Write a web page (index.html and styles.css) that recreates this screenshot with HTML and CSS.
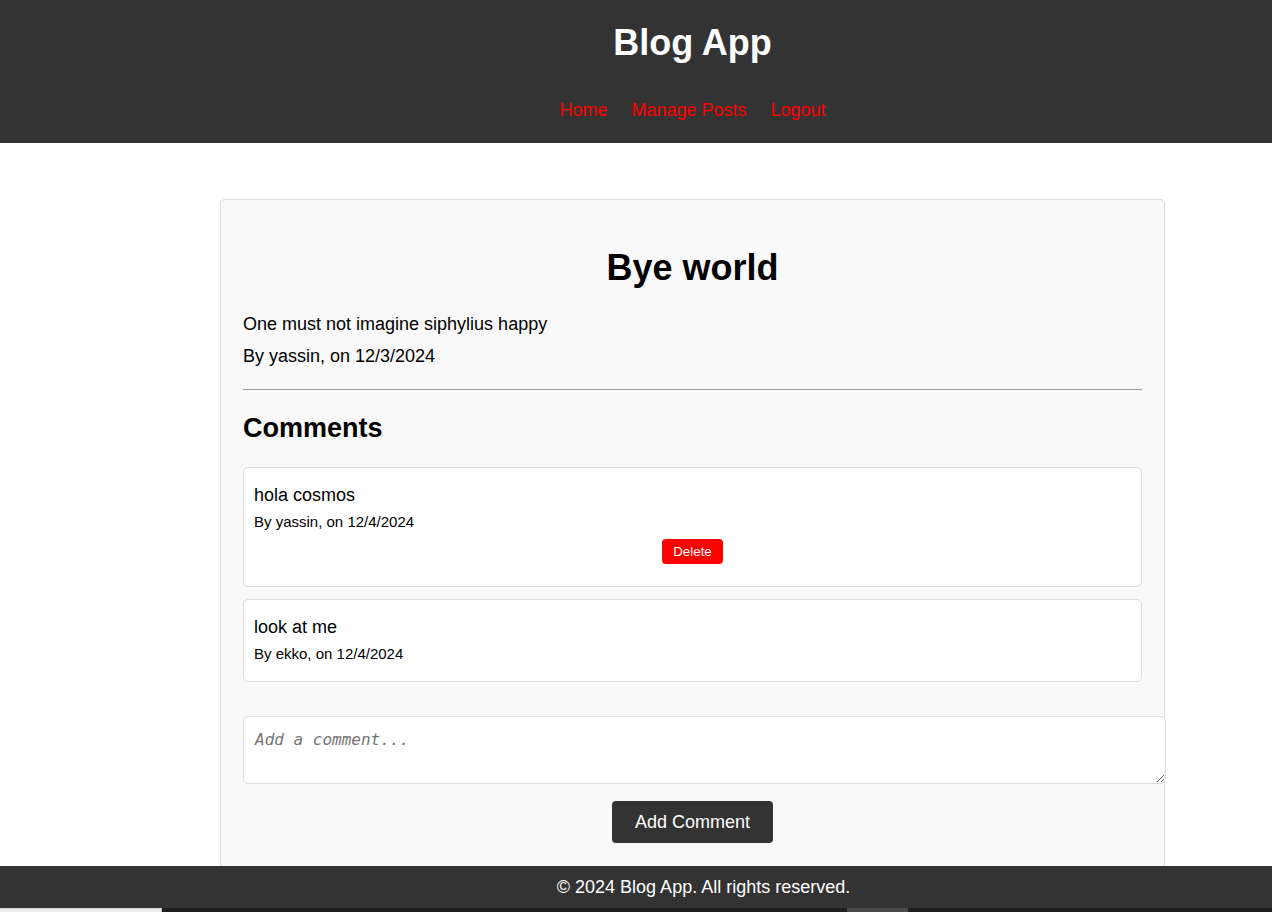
FILE: index.html
```html
<!DOCTYPE html>
<html lang="en">
<head>
<meta charset="utf-8">
<title>Blog App</title>
<link rel="stylesheet" href="styles.css">
</head>
<body>
<header class="site-header">
  <h1 class="site-title">Blog App</h1>
  <nav class="site-nav">
    <a href="#" class="nav-link">Home</a>
    <a href="#" class="nav-link">Manage Posts</a>
    <a href="#" class="nav-link">Logout</a>
  </nav>
</header>

<main class="main">
  <article class="post-card">
    <h2 class="post-title">Bye world</h2>
    <p class="post-body">One must not imagine siphylius happy</p>
    <p class="post-meta">By yassin, on 12/3/2024</p>
    <hr class="divider">
    <h3 class="comments-title">Comments</h3>

    <div class="comment">
      <p class="comment-text">hola cosmos</p>
      <p class="comment-meta">By yassin, on 12/4/2024</p>
      <div class="comment-actions">
        <button class="btn-delete" type="button">Delete</button>
      </div>
    </div>

    <div class="comment">
      <p class="comment-text">look at me</p>
      <p class="comment-meta">By ekko, on 12/4/2024</p>
    </div>

    <form class="comment-form">
      <textarea class="comment-input" placeholder="Add a comment..."></textarea>
      <button class="btn-add" type="button">Add Comment</button>
    </form>
  </article>
</main>

<div class="bottom-dock">
  <footer class="site-footer">© 2024 Blog App. All rights reserved.</footer>
  <div class="strip">
    <span class="strip-light"></span>
    <span class="strip-dark"></span>
    <span class="strip-mid"></span>
    <span class="strip-rest"></span>
  </div>
</div>
</body>
</html>
```

FILE: styles.css
```css
* { box-sizing: content-box; }

body {
  margin: 0;
  font-family: "Liberation Sans", Arial, sans-serif;
  font-size: 18px;
  color: #000;
  background: #fff;
}

.site-header {
  background: #333;
  padding: 22px 0 22px 113px;
  text-align: center;
}

.site-title {
  margin: 0 0 36px;
  font-size: 36px;
  font-weight: bold;
  color: #fff;
  line-height: normal;
}

.site-nav {
  display: flex;
  justify-content: center;
  gap: 24px;
}

.nav-link {
  color: #f00;
  text-decoration: none;
  font-size: 18px;
}

.main {
  padding-left: 113px;
}

.post-card {
  width: 899px;
  margin: 56px auto 0;
  padding: 22px 22px 26px;
  background: #f9f9f9;
  border: 1px solid #ddd;
  border-radius: 5px;
}

.post-title {
  margin: 25px 0 25px;
  font-size: 36px;
  text-align: center;
}

.post-body,
.post-meta {
  margin: 11px 0;
}

.divider {
  border: 0;
  border-top: 1px solid #999;
  margin: 22px 0 23px;
  height: 0;
}

.comments-title {
  margin: 23px 0 23px;
  font-size: 27px;
}

.comment {
  background: #fff;
  border: 1px solid #ddd;
  border-radius: 5px;
  padding: 10px;
  margin-bottom: 12px;
}

.comment-text {
  margin: 7px 0 7px;
  font-size: 18px;
}

.comment-meta {
  margin: 0 0 9px;
  font-size: 15px;
}

.comment-actions {
  display: flex;
  justify-content: center;
  margin-bottom: 12px;
}

.btn-delete {
  background: #f00;
  color: #fff;
  border: none;
  border-radius: 4px;
  padding: 5px 11px;
  font-family: "Liberation Sans", Arial, sans-serif;
  font-size: 13.33px;
  line-height: 15px;
}

.comment-form {
  display: flex;
  flex-direction: column;
  align-items: center;
  margin-top: 34px;
}

.comment-input {
  align-self: flex-start;
  width: 100%;
  height: 46px;
  padding: 13px 11px 7px;
  border: 1px solid #ddd;
  border-radius: 5px;
  font-family: "DejaVu Sans Mono", monospace;
  font-size: 16px;
  background: #fff;
  margin: 0;
}

.comment-input::placeholder {
  color: #757575;
  font-style: italic;
}

.btn-add {
  margin-top: 17px;
  background: #333;
  color: #fff;
  border: none;
  border-radius: 4px;
  padding: 10px 23px;
  font-family: "Liberation Sans", Arial, sans-serif;
  font-size: 18px;
  line-height: 22px;
}

.bottom-dock {
  position: fixed;
  left: 0;
  right: 0;
  bottom: 0;
}

.site-footer {
  background: #333;
  color: #fff;
  padding: 10px 0 10px 135px;
  line-height: 22px;
  text-align: center;
  font-size: 18px;
}

.strip {
  display: flex;
  height: 4px;
  background: #1f1f1f;
}

.strip-light {
  width: 161px;
  background: #ececec;
  border-top: 1px solid #cfcfcf;
  border-right: 1px solid #bdbdbd;
  height: 3px;
}

.strip-dark {
  width: 685px;
  background: #1f1f1f;
}

.strip-mid {
  width: 61px;
  background: #4a4a4a;
}

.strip-rest {
  flex: 1;
  background: #1f1f1f;
}
```
